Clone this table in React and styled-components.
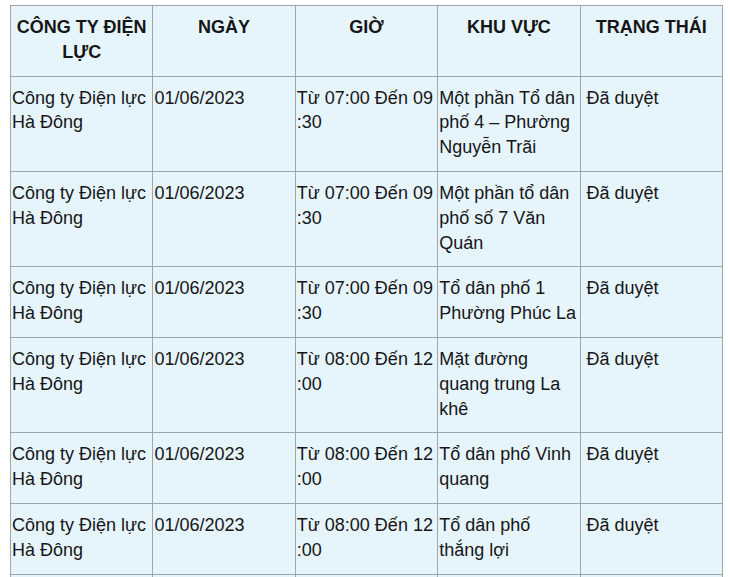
import React from "react";
import styled, { createGlobalStyle } from "styled-components";

const GlobalStyle = createGlobalStyle`
  body {
    margin: 0;
    background: #ffffff;
    font-family: "Liberation Sans", Arial, sans-serif;
  }
`;

const Wrapper = styled.div`
  padding: 5px 0 0 10px;
`;

const Table = styled.table`
  width: 713px;
  border-collapse: collapse;
  table-layout: fixed;
  background: #e6f4fc;
  color: #161616;
  font-size: 18px;
  line-height: 24.8px;
`;

const Th = styled.th`
  border: 1px solid #9fa5a9;
  padding: 9px 2px 11px;
  font-weight: bold;
  text-align: center;
  vertical-align: top;
`;

const Td = styled.td`
  border: 1px solid #9fa5a9;
  padding: 9px 1px 11px ${(p) => (p.$indent ? "6px" : "1px")};
  text-align: left;
  vertical-align: top;
`;

const headers = ["CÔNG TY ĐIỆN LỰC", "NGÀY", "GIỜ", "KHU VỰC", "TRẠNG THÁI"];

const rows = [
  { time: ["Từ 07:00 Đến 09", ":30"], area: "Một phần Tổ dân phố 4 – Phường Nguyễn Trãi" },
  { time: ["Từ 07:00 Đến 09", ":30"], area: "Một phần tổ dân phố số 7 Văn Quán" },
  { time: ["Từ 07:00 Đến 09", ":30"], area: "Tổ dân phố 1 Phường Phúc La" },
  { time: ["Từ 08:00 Đến 12", ":00"], area: "Mặt đường quang trung La khê" },
  { time: ["Từ 08:00 Đến 12", ":00"], area: "Tổ dân phố Vinh quang" },
  { time: ["Từ 08:00 Đến 12", ":00"], area: "Tổ dân phố thắng lợi" },
  { time: ["Từ 08:00 Đến 12", ":00"], area: "Tổ dân phố Yên Phúc" },
];

export default function App() {
  return (
    <>
      <GlobalStyle />
      <Wrapper>
        <Table>
          <thead>
            <tr>
              {headers.map((h) => (
                <Th key={h}>{h}</Th>
              ))}
            </tr>
          </thead>
          <tbody>
            {rows.map((r, i) => (
              <tr key={i}>
                <Td>Công ty Điện lực Hà Đông</Td>
                <Td>01/06/2023</Td>
                <Td>
                  {r.time[0]}
                  <br />
                  {r.time[1]}
                </Td>
                <Td>{r.area}</Td>
                <Td $indent>Đã duyệt</Td>
              </tr>
            ))}
          </tbody>
        </Table>
      </Wrapper>
    </>
  );
}
